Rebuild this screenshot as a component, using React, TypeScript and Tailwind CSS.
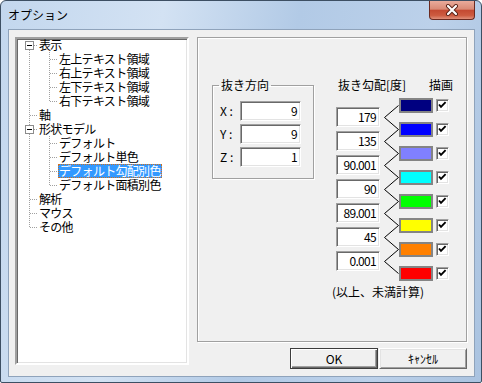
import React from 'react'

type Cell = 'boxFirst' | 'box' | 'tee' | 'end' | 'pass'

const dot = { stroke: '#a0a0a0', strokeDasharray: '1 1', shapeRendering: 'crispEdges' as const }

function TreeCell({ kind }: { kind: Cell }) {
  return (
    <svg width="20" height="14" className="shrink-0">
      {kind === 'pass' && <line x1="11.5" y1="0" x2="11.5" y2="14" {...dot} />}
      {kind === 'tee' && <line x1="11.5" y1="0" x2="11.5" y2="14" {...dot} />}
      {kind === 'end' && <line x1="11.5" y1="0" x2="11.5" y2="8" {...dot} />}
      {(kind === 'tee' || kind === 'end') && <line x1="12" y1="7.5" x2="20" y2="7.5" {...dot} />}
      {(kind === 'box' || kind === 'boxFirst') && (
        <>
          {kind === 'box' && <line x1="11.5" y1="0" x2="11.5" y2="3" {...dot} />}
          <line x1="11.5" y1="12" x2="11.5" y2="14" {...dot} />
          <line x1="16" y1="7.5" x2="20" y2="7.5" {...dot} />
          <rect x="7.5" y="3.5" width="8" height="8" fill="#fff" stroke="#8c8c8c" shapeRendering="crispEdges" />
          <line x1="9" y1="7.5" x2="14" y2="7.5" stroke="#000" shapeRendering="crispEdges" />
        </>
      )}
    </svg>
  )
}

const rows: { cells: Cell[]; label: string; selected?: boolean }[] = [
  { cells: ['boxFirst'], label: '表示' },
  { cells: ['pass', 'tee'], label: '左上テキスト領域' },
  { cells: ['pass', 'tee'], label: '右上テキスト領域' },
  { cells: ['pass', 'tee'], label: '左下テキスト領域' },
  { cells: ['pass', 'end'], label: '右下テキスト領域' },
  { cells: ['tee'], label: '軸' },
  { cells: ['box'], label: '形状モデル' },
  { cells: ['pass', 'tee'], label: 'デフォルト' },
  { cells: ['pass', 'tee'], label: 'デフォルト単色' },
  { cells: ['pass', 'tee'], label: 'デフォルト勾配別色', selected: true },
  { cells: ['pass', 'end'], label: 'デフォルト面積別色' },
  { cells: ['tee'], label: '解析' },
  { cells: ['tee'], label: 'マウス' },
  { cells: ['end'], label: 'その他' },
]

const sunken =
  'border border-t-[#a0a0a0] border-l-[#a0a0a0] border-r-white border-b-white shadow-[inset_1px_1px_0_#696969,inset_-1px_-1px_0_#e3e3e3]'

function Edit({ value, className }: { value: string; className: string }) {
  return (
    <div className={`flex h-[20px] items-center justify-end bg-white pr-[3px] text-[12px] leading-[14px] tracking-[-0.7px] ${sunken} ${className}`}>
      {value}
    </div>
  )
}

function Check() {
  return (
    <div className={`h-[13px] w-[13px] bg-white ${sunken}`}>
      <svg width="11" height="11" viewBox="0 0 11 11">
        <path d="M2 4.5 L4 6.8 L8.6 2.2" fill="none" stroke="#000" strokeWidth="1.9" />
      </svg>
    </div>
  )
}

const swatches = ['#000080', '#0000ff', '#8080ff', '#00ffff', '#00ff00', '#ffff00', '#ff8000', '#ff0000']
const slopes = ['179', '135', '90.001', '90', '89.001', '45', '0.001']

function Zigzag() {
  const pts: string[] = []
  for (let i = 0; i < 15; i++) {
    const y = 7.5 + i * 12
    pts.push(`${i % 2 === 0 ? 18.5 : 4.5},${y}`)
  }
  return (
    <svg width="19" height="183" className="shrink-0">
      <polyline points={pts.join(' ')} fill="none" stroke="#000" strokeWidth="1" />
    </svg>
  )
}

export default function App() {
  return (
    <div className="relative flex h-[383px] w-[482px] flex-col overflow-hidden rounded-t-[6px] rounded-b-[2px] border border-[#3d4f63] bg-[linear-gradient(100deg,#c3d7ee_0%,#d3e2f3_30%,#b2cae6_55%,#bcd1ea_80%,#aac3e0_100%)] font-[Noto_Sans_CJK_JP,sans-serif] text-black">
      <div className="flex h-[28px] items-start">
        <div className="pl-[7px] pt-[7px] text-[12px] leading-[14px]">オプション</div>
        <div className="ml-auto mr-[6px] flex h-[19px] w-[46px] items-center justify-center rounded-b-[4px] border border-t-0 border-[#6b2a20] bg-[linear-gradient(#e9ab9b,#d98a76_45%,#c44a32_52%,#cd5b40_80%,#e0907a)]">
          <svg width="14" height="12" viewBox="0 0 14 12">
            <path d="M3 2 L11 10 M11 2 L3 10" stroke="#5a2318" strokeWidth="4" strokeLinecap="round" />
            <path d="M3 2 L11 10 M11 2 L3 10" stroke="#fff" strokeWidth="2.2" strokeLinecap="round" />
          </svg>
        </div>
      </div>

      <div className="ml-[7px] flex h-[348px] w-[467px] border border-[#8fa3bb] bg-[#f0f0f0] pl-[6px] pt-[7px]">
        <div className="h-[328px] w-[174px] overflow-hidden border-2 border-t-[#a0a0a0] border-l-[#a0a0a0] border-r-white border-b-white bg-white shadow-[inset_1px_1px_0_#696969,inset_-1px_-1px_0_#e3e3e3]">
          <div className="-mt-px pl-px">
            {rows.map((r) => (
              <div key={r.label} className="flex h-[14px] items-start">
                {r.cells.map((c, i) => (
                  <TreeCell key={i} kind={c} />
                ))}
                <span
                  className={`h-[14px] whitespace-nowrap px-px text-[12px] leading-[14px] tracking-[-0.7px] ${
                    r.selected ? 'bg-[#3399ff] text-white outline outline-1 -outline-offset-1 outline-dotted outline-[#d07020]' : ''
                  }`}
                >
                  {r.label}
                </span>
              </div>
            ))}
          </div>
        </div>

        <div className="ml-[8px] flex flex-col">
          <div className="flex h-[305px] w-[270px] items-start border border-[#a0a0a0] shadow-[inset_1px_1px_0_#fff,1px_1px_0_#fff]">
            <fieldset className="ml-[14px] mt-[40px] h-[101px] w-[102px] border border-[#a0a0a0] shadow-[inset_1px_1px_0_#fff,1px_1px_0_#fff]">
              <legend className="ml-[6px] px-[2px] text-[12px] leading-[14px]">抜き方向</legend>
              <div className="mt-[9px] flex flex-col gap-[3px] pl-[7px]">
                {[
                  ['X :', '9'],
                  ['Y :', '9'],
                  ['Z :', '1'],
                ].map(([l, v]) => (
                  <div key={l} className="flex items-center">
                    <span className="w-[20px] text-[12px] leading-[14px]">{l}</span>
                    <Edit value={v} className="w-[61px]" />
                  </div>
                ))}
              </div>
            </fieldset>

            <div className="ml-[18px] mt-[40px] flex flex-col">
              <div className="flex h-[14px] text-[12px] leading-[14px]">
                <span className="ml-[6px] w-[91px] whitespace-nowrap">抜き勾配[度]</span>
                <span>描画</span>
              </div>
              <div className="mt-[6px] flex items-start">
                <div className="ml-[4px] mt-[9px] flex flex-col gap-[4px]">
                  {slopes.map((s) => (
                    <Edit key={s} value={s} className="w-[44px]" />
                  ))}
                </div>
                <Zigzag />
                <div className="flex flex-col gap-[9px]">
                  {swatches.map((c) => (
                    <div key={c} className="h-[15px] w-[34px] border-2 border-[#848484]" style={{ backgroundColor: c }} />
                  ))}
                </div>
                <div className="ml-[3px] mt-[1px] flex flex-col gap-[11px]">
                  {swatches.map((c) => (
                    <Check key={c} />
                  ))}
                </div>
              </div>
              <div className="mt-[4px] whitespace-nowrap text-[12px] leading-[14px]">(以上、未満計算)</div>
            </div>
          </div>

          <div className="mt-[6px] flex justify-end gap-[1px]">
            <div className="flex h-[21px] w-[88px] items-center justify-center border border-[#3c3c3c] bg-[#f0f0f0] text-[12px] leading-[14px] shadow-[inset_1px_1px_0_#fff,inset_-1px_-1px_0_#696969,inset_-2px_-2px_0_#a0a0a0]">
              OK
            </div>
            <div className="flex h-[21px] w-[88px] items-center justify-center border border-t-white border-l-white border-r-[#696969] border-b-[#696969] bg-[#f0f0f0] text-[12px] leading-[14px] shadow-[inset_1px_1px_0_#e3e3e3,inset_-1px_-1px_0_#a0a0a0]">
              ｷｬﾝｾﾙ
            </div>
          </div>
        </div>
      </div>
    </div>
  )
}
